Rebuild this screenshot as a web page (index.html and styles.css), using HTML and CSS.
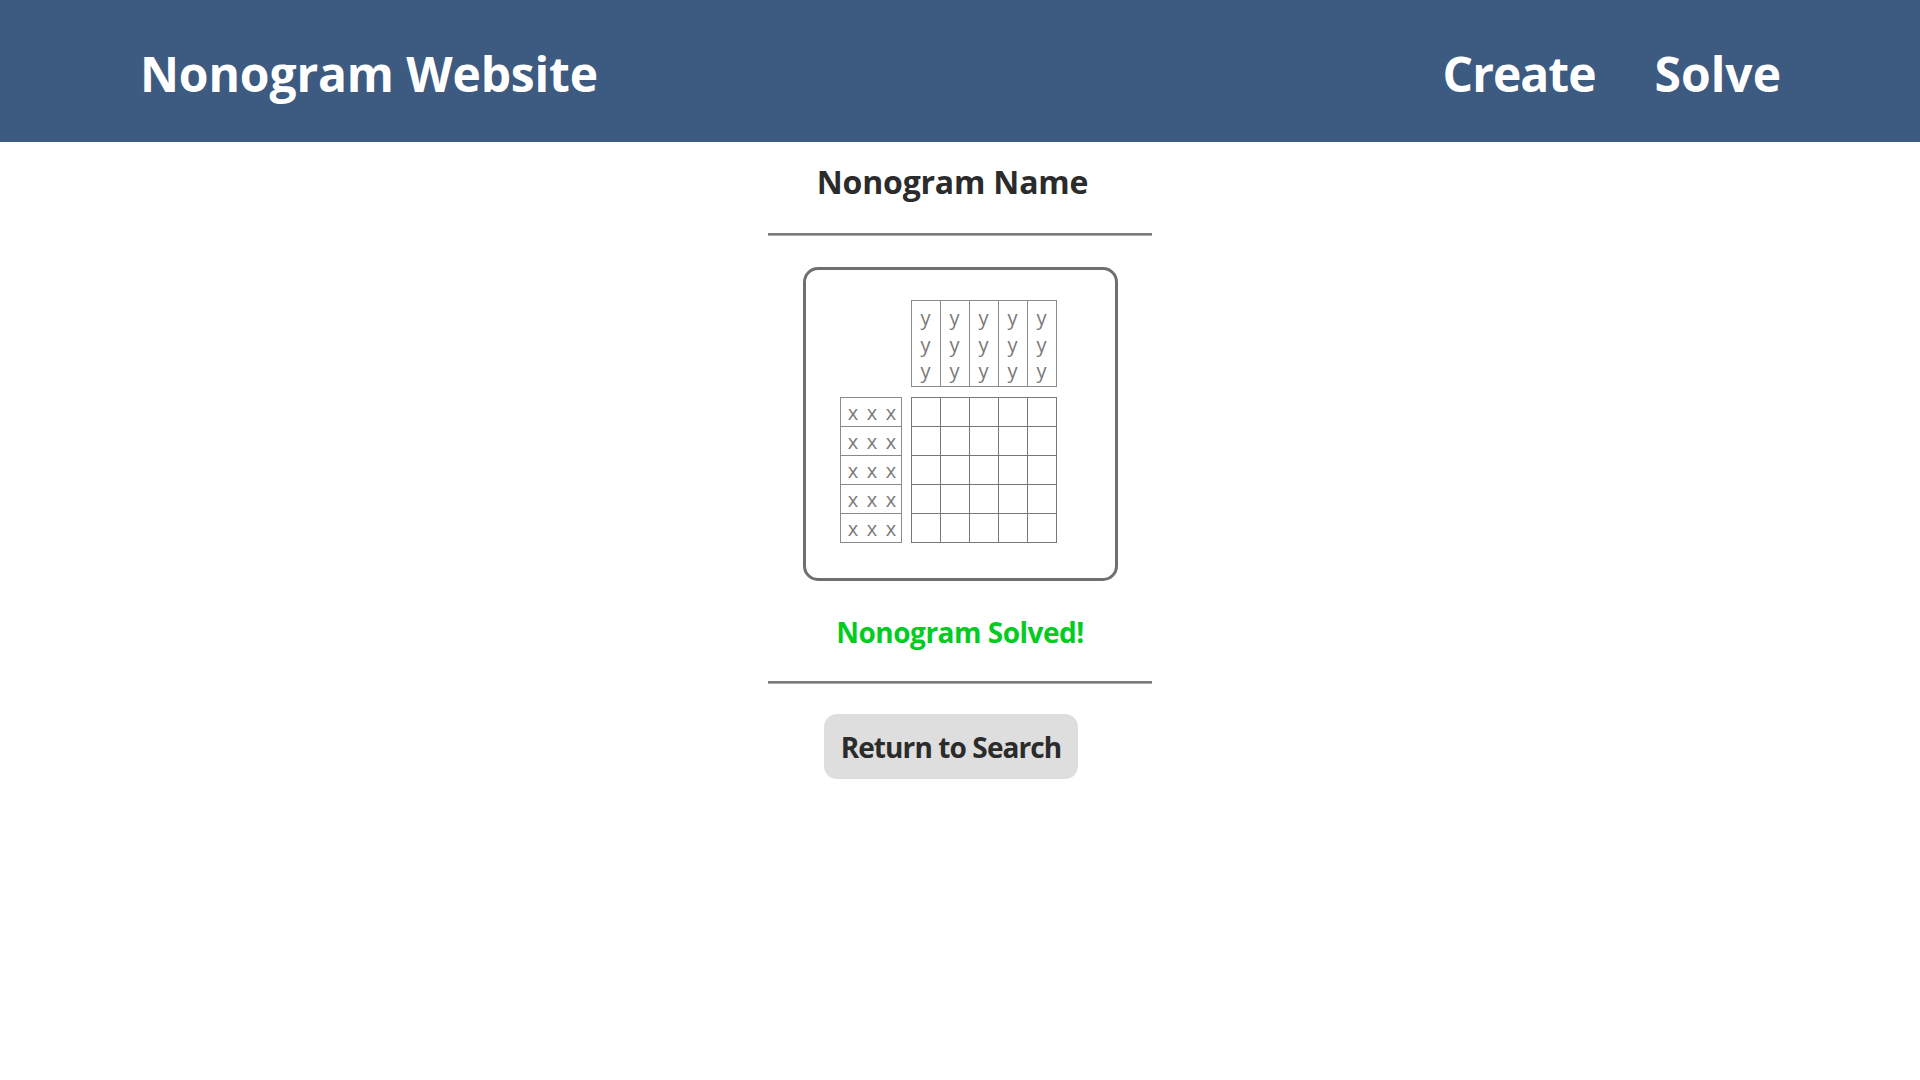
FILE: index.html
```html
<!DOCTYPE html>
<html lang="en">
<head>
<meta charset="utf-8">
<title>Nonogram Website</title>
<link rel="stylesheet" href="styles.css">
</head>
<body>
<header class="topbar">
  <div class="brand">Nonogram Website</div>
  <nav class="nav">
    <a class="nav-link nav-create" href="#">Create</a>
    <a class="nav-link" href="#">Solve</a>
  </nav>
</header>
<main class="page">
  <h2 class="puzzle-title">Nonogram Name</h2>
  <hr class="rule">
  <div class="board">
    <div class="corner"></div>
    <div class="col-clues">
      <div class="col-clue"><span>y</span><span>y</span><span>y</span></div>
      <div class="col-clue"><span>y</span><span>y</span><span>y</span></div>
      <div class="col-clue"><span>y</span><span>y</span><span>y</span></div>
      <div class="col-clue"><span>y</span><span>y</span><span>y</span></div>
      <div class="col-clue"><span>y</span><span>y</span><span>y</span></div>
    </div>
    <div class="row-clues">
      <div class="row-clue"><span>x</span><span>x</span><span>x</span></div>
      <div class="row-clue"><span>x</span><span>x</span><span>x</span></div>
      <div class="row-clue"><span>x</span><span>x</span><span>x</span></div>
      <div class="row-clue"><span>x</span><span>x</span><span>x</span></div>
      <div class="row-clue"><span>x</span><span>x</span><span>x</span></div>
    </div>
    <div class="cells">
      <div class="cell"></div><div class="cell"></div><div class="cell"></div><div class="cell"></div><div class="cell"></div>
      <div class="cell"></div><div class="cell"></div><div class="cell"></div><div class="cell"></div><div class="cell"></div>
      <div class="cell"></div><div class="cell"></div><div class="cell"></div><div class="cell"></div><div class="cell"></div>
      <div class="cell"></div><div class="cell"></div><div class="cell"></div><div class="cell"></div><div class="cell"></div>
      <div class="cell"></div><div class="cell"></div><div class="cell"></div><div class="cell"></div><div class="cell"></div>
    </div>
  </div>
  <p class="status">Nonogram Solved!</p>
  <hr class="rule rule-lower">
  <button class="back-btn" type="button">Return to Search</button>
</main>
</body>
</html>
```
FILE: styles.css
```css
* {
  box-sizing: border-box;
}

html, body {
  margin: 0;
  padding: 0;
  background: #ffffff;
}

body {
  font-family: "Open Sans", "Noto Sans", "DejaVu Sans", sans-serif;
  color: #2b2b2b;
}

.topbar {
  height: 142px;
  background: #3d5a80;
  display: flex;
  align-items: center;
  justify-content: space-between;
  padding: 4px 139px 0 140px;
}

.brand {
  font-size: 48px;
  font-weight: 700;
  color: #ffffff;
  line-height: normal;
  letter-spacing: -0.15px;
}

.nav {
  display: flex;
  gap: 59px;
}

.nav-link {
  font-size: 48px;
  font-weight: 700;
  color: #ffffff;
  text-decoration: none;
  line-height: normal;
}

.nav-create {
  letter-spacing: -1px;
}

.page {
  display: flex;
  flex-direction: column;
  align-items: center;
}

.puzzle-title {
  margin: 20px 15px 0 0;
  font-size: 32px;
  line-height: 40px;
  font-weight: 700;
  color: #2b2b2b;
  letter-spacing: -0.2px;
}

.rule {
  width: 384px;
  height: 3px;
  margin: 31px 0 0 0;
  border: 0;
  border-top: 2px solid #7b7b7b;
  border-bottom: 1px solid #a8a8a8;
}

.board {
  margin-top: 31px;
  width: 315px;
  height: 314px;
  border: 3px solid #6f6f6f;
  border-radius: 15px;
  padding: 30px 58px 35px 34px;
  display: grid;
  grid-template-columns: 62px 146px;
  grid-template-rows: 87px 146px;
  column-gap: 9px;
  row-gap: 10px;
}

.col-clues {
  display: flex;
  border-left: 1px solid #8a8a8a;
  border-top: 1px solid #8a8a8a;
}

.col-clue {
  width: 29px;
  height: 86px;
  border-right: 1px solid #8a8a8a;
  border-bottom: 1px solid #8a8a8a;
  display: flex;
  flex-direction: column;
  align-items: center;
  padding-top: 4px;
}

.col-clue span,
.row-clue span {
  font-size: 20px;
  line-height: 26.67px;
  color: #7a7a7a;
  font-weight: 400;
}

.row-clues {
  display: flex;
  flex-direction: column;
  border-left: 1px solid #8a8a8a;
  border-top: 1px solid #8a8a8a;
}

.row-clue {
  height: 29px;
  border-right: 1px solid #8a8a8a;
  border-bottom: 1px solid #8a8a8a;
  display: grid;
  grid-template-columns: repeat(3, 1fr);
  padding: 2px 0 0 3px;
  overflow: hidden;
}

.row-clue span {
  text-align: center;
}

.cells {
  display: grid;
  grid-template-columns: repeat(5, 29px);
  grid-template-rows: repeat(5, 29px);
  border-left: 1px solid #777777;
  border-top: 1px solid #777777;
}

.cell {
  border-right: 1px solid #777777;
  border-bottom: 1px solid #777777;
}

.status {
  margin: 33px 0 0 0;
  font-size: 28px;
  line-height: 36px;
  font-weight: 700;
  color: #00cc22;
  letter-spacing: -0.5px;
}

.rule-lower {
  margin-top: 31px;
}

.back-btn {
  margin: 30px 18px 0 0;
  height: 65px;
  padding: 0 17px;
  border: 0;
  border-radius: 13px;
  background: #dedede;
  font-family: "Open Sans", "Noto Sans", "DejaVu Sans", sans-serif;
  font-size: 28px;
  line-height: 36px;
  font-weight: 700;
  color: #2b2b2b;
  letter-spacing: -0.9px;
  cursor: pointer;
}
```
